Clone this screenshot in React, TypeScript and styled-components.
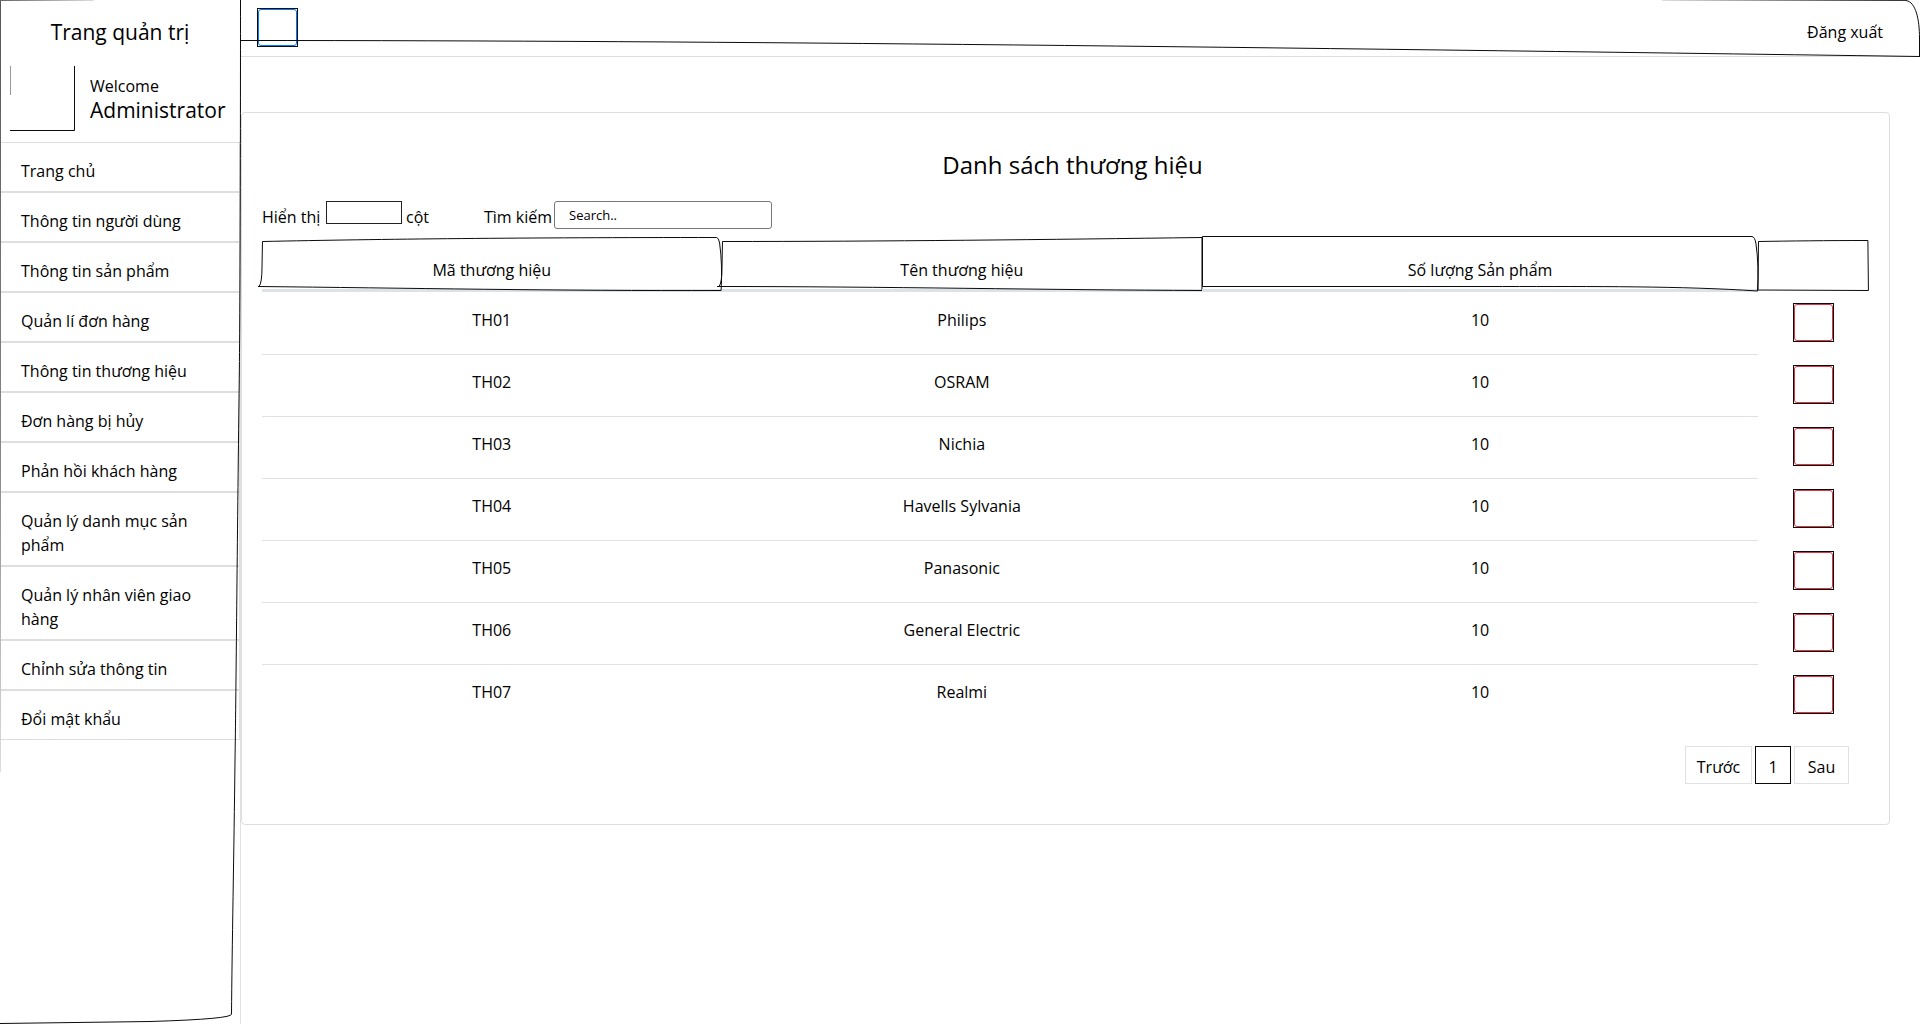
import React from "react";
import styled, { createGlobalStyle } from "styled-components";

const ink = "#0b0b0b";
const rule = "#dedede";
const tableRule = "#dee2e6";

const GlobalStyle = createGlobalStyle`
  *, *::before, *::after { box-sizing: border-box; }
  body {
    margin: 0;
    background: #fff;
    color: #000;
    font-family: "Open Sans", "Noto Sans", sans-serif;
    font-size: 16px;
    line-height: 24px;
  }
  a { color: inherit; text-decoration: none; }
  button, input, select { font: inherit; color: inherit; }
`;

const Page = styled.div`
  display: flex;
  min-height: 100vh;
`;

const Sidebar = styled.aside`
  position: relative;
  flex: 0 0 240px;
`;

const Sketch = styled.svg`
  position: absolute;
  inset: 0;
  width: 100%;
  height: 100%;
  overflow: visible;
  pointer-events: none;
  fill: none;
  stroke: ${ink};
  stroke-width: 1px;

  path { vector-effect: non-scaling-stroke; }
`;

const Brand = styled.h1`
  margin: 0;
  padding: 16px 0 18px;
  font-size: 21px;
  font-weight: 400;
  line-height: 32px;
  text-align: center;
`;

const Profile = styled.div`
  display: flex;
  gap: 15px;
  padding: 0 0 11px 10px;
`;

const Avatar = styled.div`
  position: relative;
  width: 65px;
  height: 65px;
`;

const Greeting = styled.div`
  padding-top: 8px;
`;

const UserName = styled.strong`
  display: block;
  font-size: 21px;
  font-weight: 400;
`;

const Menu = styled.ul`
  margin: 0;
  padding: 0;
  list-style: none;
`;

const MenuItem = styled.li`
  padding: 16px 36px 8px 20px;
  border: 1px solid ${rule};
`;

const Main = styled.main`
  flex: 1;
  min-width: 0;
  border-left: 1px solid ${tableRule};
`;

const TopBar = styled.header`
  position: relative;
  display: flex;
  justify-content: space-between;
  align-items: flex-start;
  height: 57px;
  padding: 8px 37px 0 16px;
  border-bottom: 1px solid ${rule};
`;

const LogoutLink = styled.a`
  padding-top: 12px;
`;

const BoxButton = styled.button<{ $tone: string }>`
  position: relative;
  display: block;
  width: 41px;
  height: 39px;
  padding: 0;
  border: 1px solid ${ink};
  background: transparent;

  &::before {
    content: "";
    position: absolute;
    inset: 0;
    border: 1px solid ${(p) => p.$tone};
    border-radius: 3px;
  }
`;

const Card = styled.section`
  margin: 55px 30px 0 0;
  padding: 32px 20px 40px;
  border: 1px solid ${rule};
  border-radius: 4px;
`;

const Title = styled.h2`
  margin: 0 0 16px;
  padding-left: 14px;
  font-size: 24px;
  font-weight: 400;
  line-height: 40px;
  text-align: center;
`;

const Filters = styled.div`
  display: flex;
  align-items: flex-start;
  gap: 50px;
  margin-bottom: 6px;
`;

const Field = styled.div`
  display: flex;
  align-items: flex-start;
  height: 30px;
`;

const FieldLabel = styled.label<{ $width: number }>`
  width: ${(p) => p.$width}px;
  padding-top: 4px;
  white-space: nowrap;
`;

const CountSelect = styled.select`
  appearance: none;
  width: 76px;
  height: 23px;
  margin-right: 4px;
  padding: 0;
  border: 1px solid #222;
  border-radius: 0;
  background: #fff;
`;

const SearchInput = styled.input`
  width: 218px;
  height: 28px;
  padding: 0 14px;
  border: 1px solid #777;
  border-radius: 3px;
  background: #fff;
  font-size: 13px;

  &::placeholder { color: #000; opacity: 1; }
`;

const Table = styled.table`
  width: 100%;
  table-layout: fixed;
  border-collapse: separate;
  border-spacing: 0;
  text-align: center;
`;

const Col = styled.col<{ $share?: number }>`
  width: ${(p) => (p.$share ? `${p.$share}%` : "auto")};
`;

const HeadCell = styled.th<{ $ruled?: boolean }>`
  position: relative;
  height: 55px;
  padding: 21px 0 10px;
  box-shadow: inset 0 -3px 0 ${(p) => (p.$ruled ? tableRule : "transparent")};
  font-weight: 400;
`;

const Row = styled.tr`
  & + & td:not(:last-child) { border-top-color: ${tableRule}; }
`;

const Cell = styled.td`
  height: 62px;
  padding: 15px 0 0;
  border-top: 1px solid transparent;
  vertical-align: top;
`;

const ActionCell = styled(Cell)`
  padding-top: 10px;

  button { margin: 0 auto; }
`;

const Pager = styled.nav`
  display: flex;
  justify-content: flex-end;
  gap: 3px;
  margin: 20px 20px 0 0;
`;

const PageButton = styled.button<{ $width: number; $active?: boolean }>`
  width: ${(p) => p.$width}px;
  height: 38px;
  padding: 4px 0 0;
  border: 1px solid ${(p) => (p.$active ? ink : tableRule)};
  background: #fff;
`;

const menu = [
  "Trang chủ",
  "Thông tin người dùng",
  "Thông tin sản phẩm",
  "Quản lí đơn hàng",
  "Thông tin thương hiệu",
  "Đơn hàng bị hủy",
  "Phản hồi khách hàng",
  "Quản lý danh mục sản phẩm",
  "Quản lý nhân viên giao hàng",
  "Chỉnh sửa thông tin",
  "Đổi mật khẩu",
];

const columns = [
  {
    label: "Mã thương hiệu",
    width: 460,
    path: "M0.5 4.5 C120 2 260 0.5 455 0.5 Q457 0.5 458 6 Q461 28 459.5 53.5 C300 54 140 51 -4 49.5 M-3 49.5 Q0 46 0 30 L0.5 4.5",
  },
  {
    label: "Tên thương hiệu",
    width: 481,
    path: "M0.5 4.5 C160 4.5 330 2.5 480.5 0.5 V53.5 C330 53 160 49.5 -5 49.5 M-3 49.5 Q0 46 0 30 L0.5 4.5",
  },
  {
    label: "Số lượng Sản phẩm",
    width: 555,
    path: "M0.5 -0.5 H549 Q552 0 553 7 Q556 28 554.5 54 C480 49 390 49.5 300 49.5 H0.5 Z",
  },
  {
    label: "",
    width: 111,
    path: "M0.5 4.5 C30 4 70 3.5 110 3.5 L110.5 53.5 L0 53 Z",
  },
];

const brands = [
  ["TH01", "Philips", "10"],
  ["TH02", "OSRAM", "10"],
  ["TH03", "Nichia", "10"],
  ["TH04", "Havells Sylvania", "10"],
  ["TH05", "Panasonic", "10"],
  ["TH06", "General Electric", "10"],
  ["TH07", "Realmi", "10"],
];

function SidebarOutline() {
  return (
    <Sketch viewBox="0 0 240 1024" preserveAspectRatio="none" aria-hidden="true">
      <defs>
        <linearGradient id="edge" gradientUnits="userSpaceOnUse" x1="0" y1="0" x2="0" y2="772">
          <stop offset="0" stopColor="#555" />
          <stop offset="0.6" stopColor="#888" />
          <stop offset="1" stopColor="#ddd" />
        </linearGradient>
        <linearGradient id="top" gradientUnits="userSpaceOnUse" x1="0" y1="0" x2="94" y2="0">
          <stop offset="0" stopColor="#666" />
          <stop offset="1" stopColor="#ddd" />
        </linearGradient>
      </defs>
      <path stroke="url(#edge)" d="M0.5 0 V772" />
      <path stroke="url(#top)" d="M0 0.5 H94" />
      <path d="M240.5 0 C240.5 180 240 330 239 400 C237 560 236 700 235 760 C234 850 232 950 231.5 1014 Q233 1019 150 1021.5 L0 1023.5" />
    </Sketch>
  );
}

function TopBarOutline() {
  return (
    <Sketch viewBox="0 0 1679 56" preserveAspectRatio="none" aria-hidden="true">
      <defs>
        <linearGradient id="barTop" gradientUnits="userSpaceOnUse" x1="1421" y1="0" x2="1665" y2="0">
          <stop offset="0" stopColor="#ddd" />
          <stop offset="1" stopColor="#333" />
        </linearGradient>
      </defs>
      <path d="M0 40.5 C500 40.5 1000 47 1679 56.5" />
      <path stroke="url(#barTop)" d="M1421 0.5 H1665" />
      <path d="M1665 0.5 C1675 2 1678.5 20 1678.5 38 V56" />
    </Sketch>
  );
}

export default function App() {
  return (
    <Page>
      <GlobalStyle />
      <Sidebar>
        <Brand>Trang quản trị</Brand>
        <Profile>
          <Avatar>
            <Sketch viewBox="0 0 65 65" aria-hidden="true">
              <path d="M64.5 0 V64.5 H0" />
              <path stroke="#999" d="M0.5 0 V29" />
            </Sketch>
          </Avatar>
          <Greeting>
            Welcome
            <UserName>Administrator</UserName>
          </Greeting>
        </Profile>
        <Menu>
          {menu.map((item) => (
            <MenuItem key={item}>
              <a href="#">{item}</a>
            </MenuItem>
          ))}
        </Menu>
        <SidebarOutline />
      </Sidebar>

      <Main>
        <TopBar>
          <BoxButton $tone="#007bff" aria-label="Menu" />
          <LogoutLink href="#">Đăng xuất</LogoutLink>
          <TopBarOutline />
        </TopBar>

        <Card>
          <Title>Danh sách thương hiệu</Title>
          <Filters>
            <Field>
              <FieldLabel $width={64} htmlFor="count">Hiển thị</FieldLabel>
              <CountSelect id="count" />
              <FieldLabel as="span" $width={28}>cột</FieldLabel>
            </Field>
            <Field>
              <FieldLabel $width={70} htmlFor="search">Tìm kiếm</FieldLabel>
              <SearchInput id="search" type="text" placeholder="Search.." />
            </Field>
          </Filters>

          <Table>
            <colgroup>
              <Col $share={28.6} />
              <Col $share={29.9} />
              <Col $share={34.6} />
              <Col />
            </colgroup>
            <thead>
              <tr>
                {columns.map((c) => (
                  <HeadCell key={c.width} scope="col" $ruled={c.label !== ""}>
                    {c.label}
                    <Sketch viewBox={`0 0 ${c.width} 55`} preserveAspectRatio="none" aria-hidden="true">
                      <path d={c.path} />
                    </Sketch>
                  </HeadCell>
                ))}
              </tr>
            </thead>
            <tbody>
              {brands.map(([code, name, count]) => (
                <Row key={code}>
                  <Cell>{code}</Cell>
                  <Cell>{name}</Cell>
                  <Cell>{count}</Cell>
                  <ActionCell>
                    <BoxButton $tone="#dc3545" aria-label={`Xóa ${name}`} />
                  </ActionCell>
                </Row>
              ))}
            </tbody>
          </Table>

          <Pager aria-label="Phân trang">
            <PageButton $width={67}>Trước</PageButton>
            <PageButton $width={36} $active>1</PageButton>
            <PageButton $width={55}>Sau</PageButton>
          </Pager>
        </Card>
      </Main>
    </Page>
  );
}
